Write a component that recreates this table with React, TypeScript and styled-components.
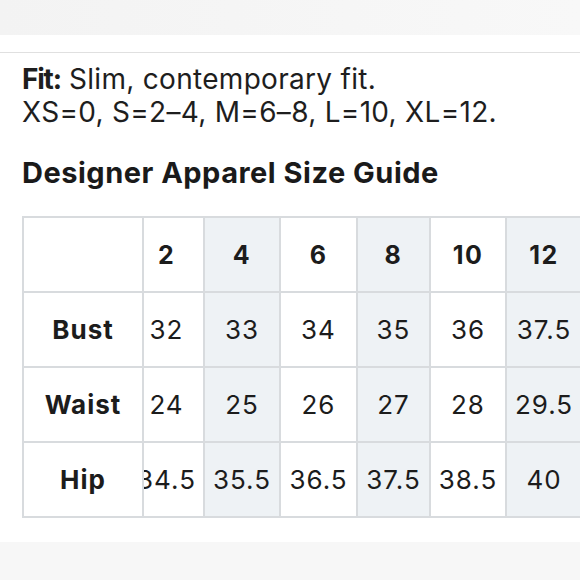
import React from 'react'
import styled, { createGlobalStyle } from 'styled-components'

const GlobalStyle = createGlobalStyle`
  body {
    margin: 0;
    background: #ffffff;
    font-family: Inter, 'Liberation Sans', sans-serif;
    color: #1c1c1c;
  }
`

type Row = {
  label: string,
  values: string[]
}

const SIZES = ['2', '4', '6', '8', '10', '12']

const ROWS: Row[] = [
  { label: 'Bust', values: ['32', '33', '34', '35', '36', '37.5'] },
  { label: 'Waist', values: ['24', '25', '26', '27', '28', '29.5'] },
  { label: 'Hip', values: ['34.5', '35.5', '36.5', '37.5', '38.5', '40'] },
]

const Page = styled.div`
  width: 580px;
  height: 580px;
  overflow: hidden;
  display: flex;
  flex-direction: column;
`

const TopBand = styled.div`
  height: 35px;
  background: linear-gradient(90deg, #f3f3f3, #f6f6f6 60%, #f8f8f8);
`

const Divider = styled.div`
  margin-top: 17px;
  border-top: 1px solid #e0e0e0;
`

const Content = styled.section`
  padding: 10px 0 0 22px;
`

const FitText = styled.p`
  margin: 0;
  font-size: 28px;
  line-height: 33px;
  letter-spacing: 0.3px;
  color: #1e1e1e;

  strong {
    font-weight: 700;
    letter-spacing: -1.2px;
  }
`

const Title = styled.h2`
  margin: 26px 0 26px;
  font-size: 29px;
  line-height: 35px;
  font-weight: 700;
  letter-spacing: 0.5px;
  color: #1a1a1a;
`

const Grid = styled.div`
  display: grid;
  grid-template-columns: 118px 59px 74px 75px 71px 74px 74px;
  grid-auto-rows: 73px;
  gap: 2px;
  padding: 2px;
  width: max-content;
  background: #d8dbde;
`

const Cell = styled.div<{ $shade?: boolean, $nudge?: boolean }>`
  display: flex;
  align-items: center;
  justify-content: center;
  overflow: hidden;
  white-space: nowrap;
  background: ${props => props.$shade ? '#eef2f5' : '#ffffff'};
  padding-right: ${props => props.$nudge ? '14px' : '0'};
  font-size: 26px;
  letter-spacing: 1px;
  color: #1c1c1c;
`

const HeadCell = styled(Cell)`
  font-weight: 700;
  font-size: 25px;
  letter-spacing: 1.5px;
`

const LabelCell = styled(Cell)`
  font-weight: 700;
  letter-spacing: 1px;
`

const BottomBand = styled.div`
  margin-top: 24px;
  flex: 1;
  background: #f7f7f7;
`

export default function App() {
  return (
    <Page>
      <GlobalStyle />
      <TopBand />
      <Divider />
      <Content>
        <FitText>
          <strong>Fit:</strong> Slim, contemporary fit.
          <br />
          XS=0, S=2–4, M=6–8, L=10, XL=12.
        </FitText>
        <Title>Designer Apparel Size Guide</Title>
        <Grid>
          <Cell />
          {SIZES.map((size, i) => (
            <HeadCell key={size} $shade={i % 2 === 1} $nudge={i === 0}>{size}</HeadCell>
          ))}
          {ROWS.map(row => (
            <React.Fragment key={row.label}>
              <LabelCell>{row.label}</LabelCell>
              {row.values.map((value, i) => (
                <Cell key={i} $shade={i % 2 === 1} $nudge={i === 0}>{value}</Cell>
              ))}
            </React.Fragment>
          ))}
        </Grid>
      </Content>
      <BottomBand />
    </Page>
  )
}
